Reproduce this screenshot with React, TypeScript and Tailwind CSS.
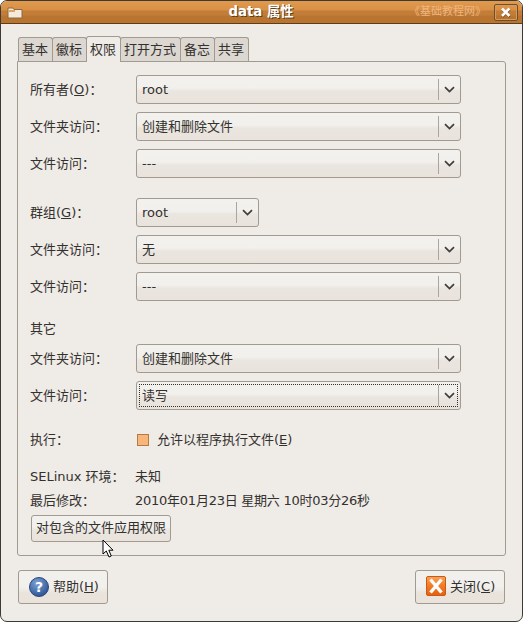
import React from "react";

const font = { fontFamily: '"DejaVu Sans","Noto Sans CJK SC",sans-serif' };

function Combo({ text, w = "w-[325px]", focus = false }: { text: string; w?: string; focus?: boolean }) {
  return (
    <div className={`relative flex h-[29px] ${w} items-center rounded-[3px] border border-[#a09a91] bg-[linear-gradient(#f3f1ee_0,#f2f0ed_12px,#eae5df_15px,#e9e3dc_100%)]`}>
      <span className="flex-1 pl-[5px] text-[13px] text-[#33312e]">{text}</span>
      <div className="h-[21px] w-px bg-[#aaa59d]" />
      <div className="flex w-[21px] justify-center">
        <svg width="11" height="7" viewBox="0 0 11 7"><path d="M1 1.2 L5.5 5.5 L10 1.2" fill="none" stroke="#403c37" strokeWidth="1.7" /></svg>
      </div>
      {focus && <div className="absolute inset-[2px] border border-dotted border-[#33312e]" />}
    </div>
  );
}

function Row({ label, children, mt = "" }: { label: React.ReactNode; children: React.ReactNode; mt?: string }) {
  return (
    <div className={`flex items-center ${mt}`}>
      <div className="w-[106px] text-[13px] text-[#33312e]">{label}</div>
      {children}
    </div>
  );
}

function Tab({ text, active = false }: { text: string; active?: boolean }) {
  return active ? (
    <div className="relative z-10 -mb-[1px] -ml-[1px] flex h-[26px] items-center rounded-t-[3px] border border-b-0 border-[#a09a91] bg-[#efebe7] pr-[4px] pl-[3px] text-[13px] text-[#33312e]">{text}</div>
  ) : (
    <div className="-ml-[1px] flex h-[24px] items-center rounded-t-[3px] border border-b-0 border-[#a09a91] bg-[#dcd7d1] pr-[4px] pl-[3px] text-[13px] text-[#33312e] first:ml-0">{text}</div>
  );
}

export default function App() {
  return (
    <div style={font} className="flex h-[622px] w-[523px] flex-col overflow-hidden rounded-[7px] border border-[#3b3a37] bg-[#efebe7]">
      <div className="relative flex h-[23px] items-center justify-center border-b border-[#5b3f1d] bg-[linear-gradient(#e09a4d_0,#d98f45_9px,#c27e38_10px,#c27e38_14px,#b9752f_15px,#b9752f_100%)]">
        <svg className="absolute left-[6px] top-[5px]" width="16" height="13" viewBox="0 0 16 13">
          <path d="M1 2 h5 l1 1.5 h8 v8.5 h-14z" fill="#f5ebdc" stroke="#8a6a44" />
          <path d="M2 5 h6" stroke="#e6a264" strokeWidth="2" />
        </svg>
        <span className="mr-[1px] text-[13.3px] font-bold text-white [text-shadow:1px_1px_0_#5b3f1d]">data 属性</span>
        <span className="absolute left-[408px] top-[3px] text-[11px] leading-[15px] text-[#f0b680]">《基础教程网》</span>
        <div className="absolute left-[493px] top-[3px] flex h-[17px] w-[24px] items-center justify-center rounded-[2px] border border-[#6d4d2a] shadow-[inset_0_0_0_1px_#d79a5b]">
          <svg width="12" height="11" viewBox="0 0 12 11"><path d="M2.2 2.2 L9.8 9.8 M9.8 2.2 L2.2 9.8" stroke="#5b3f1d" strokeWidth="2.6" /><path d="M2 1.5 L9.5 9 M9.5 1.5 L2 9" stroke="#fff" strokeWidth="2.6" /></svg>
        </div>
      </div>

      <div className="flex flex-1 flex-col px-[16px] pt-[12px]">
        <div className="flex items-end pl-[1px]">
          <Tab text="基本" />
          <Tab text="徽标" />
          <Tab text="权限" active />
          <Tab text="打开方式" />
          <Tab text="备忘" />
          <Tab text="共享" />
        </div>
        <div className="flex h-[495px] w-[489px] flex-col rounded-b-[3px] rounded-tr-[3px] border border-[#a09a91] pl-[12px] pt-[13px]">
          <div className="flex flex-col gap-[8px]">
            <Row label={<>所有者(<u>O</u>)：</>}><Combo text="root" /></Row>
            <Row label="文件夹访问："><Combo text="创建和删除文件" /></Row>
            <Row label="文件访问："><Combo text="---" /></Row>
          </div>
          <div className="mt-[20px] flex flex-col gap-[8px]">
            <Row label={<>群组(<u>G</u>)：</>}><Combo text="root" w="w-[123px]" /></Row>
            <Row label="文件夹访问："><Combo text="无" /></Row>
            <Row label="文件访问："><Combo text="---" /></Row>
          </div>
          <div className="mt-[19px] text-[13px] leading-[18px] text-[#33312e]">其它</div>
          <div className="mt-[6px] flex flex-col gap-[8px]">
            <Row label="文件夹访问："><Combo text="创建和删除文件" /></Row>
            <Row label="文件访问："><Combo text="读写" focus /></Row>
          </div>
          <Row label="执行：" mt="mt-[20px]">
            <div className="flex items-center gap-[8px] pl-[1px] text-[13px] text-[#33312e]">
              <div className="h-[12px] w-[12px] border border-[#b57a42] bg-[#f8b67a]" />
              <span>允许以程序执行文件(<u>E</u>)</span>
            </div>
          </Row>
          <Row label="SELinux 环境：" mt="mt-[17px]"><span className="-ml-[1px] text-[13px] text-[#33312e]">未知</span></Row>
          <Row label="最后修改：" mt="mt-[5px]"><span className="-ml-[1px] text-[13px] tracking-[-0.25px] text-[#33312e]">2010年01月23日 星期六 10时03分26秒</span></Row>
          <div className="relative mt-[4px] ml-[1px] flex h-[27px] w-[140px] items-center justify-center rounded-[3px] border border-[#a09a91] bg-[linear-gradient(#f3f1ee_0,#f2f0ed_11px,#eae5df_14px,#e9e3dc_100%)] text-[13px] text-[#33312e]">
            对包含的文件应用权限
            <svg className="absolute left-[70px] top-[23px]" width="13" height="20" viewBox="0 0 13 20">
              <path d="M1 1 V15 L4.3 12 L7 18 L9.3 17 L6.8 11.2 H11 Z" fill="#fff" stroke="#000" />
            </svg>
          </div>
        </div>
        <div className="mt-[14px] flex justify-between pr-[1px] pl-[1px]">
          <div className="flex h-[34px] w-[90px] items-center gap-[4px] rounded-[3px] border border-[#a09a91] bg-[linear-gradient(#f2f0ed_0,#f2f0ed_16px,#e9e3dc_22px)] pl-[10px] text-[13px] text-[#33312e]">
            <svg width="20" height="20" viewBox="0 0 20 20">
              <defs>
                <radialGradient id="q" cx="40%" cy="30%" r="75%">
                  <stop offset="0" stopColor="#7ea3d6" />
                  <stop offset="1" stopColor="#28508f" />
                </radialGradient>
              </defs>
              <circle cx="10" cy="10" r="9.5" fill="url(#q)" stroke="#26487f" />
              <text x="10" y="15" textAnchor="middle" fontSize="14" fontWeight="bold" fill="#fff" fontFamily="DejaVu Sans">?</text>
            </svg>
            <span>帮助(<u>H</u>)</span>
          </div>
          <div className="flex h-[34px] w-[90px] items-center gap-[4px] rounded-[3px] border border-[#a09a91] bg-[linear-gradient(#f2f0ed_0,#f2f0ed_16px,#e9e3dc_22px)] pl-[10px] text-[13px] text-[#33312e]">
            <svg className="-mt-[3px]" width="20" height="20" viewBox="0 0 20 20">
              <defs>
                <linearGradient id="x" x1="0" y1="0" x2="0" y2="1">
                  <stop offset="0" stopColor="#f9a35c" />
                  <stop offset="0.5" stopColor="#f47a22" />
                  <stop offset="1" stopColor="#e4600f" />
                </linearGradient>
              </defs>
              <rect x="0.5" y="0.5" width="19" height="19" rx="1.5" fill="url(#x)" stroke="#c85a12" />
              <path d="M4.5 3.5 L15.5 16.5 M15.5 3.5 L4.5 16.5" stroke="#fff" strokeWidth="3.4" />
            </svg>
            <span>关闭(<u>C</u>)</span>
          </div>
        </div>
      </div>
    </div>
  );
}
